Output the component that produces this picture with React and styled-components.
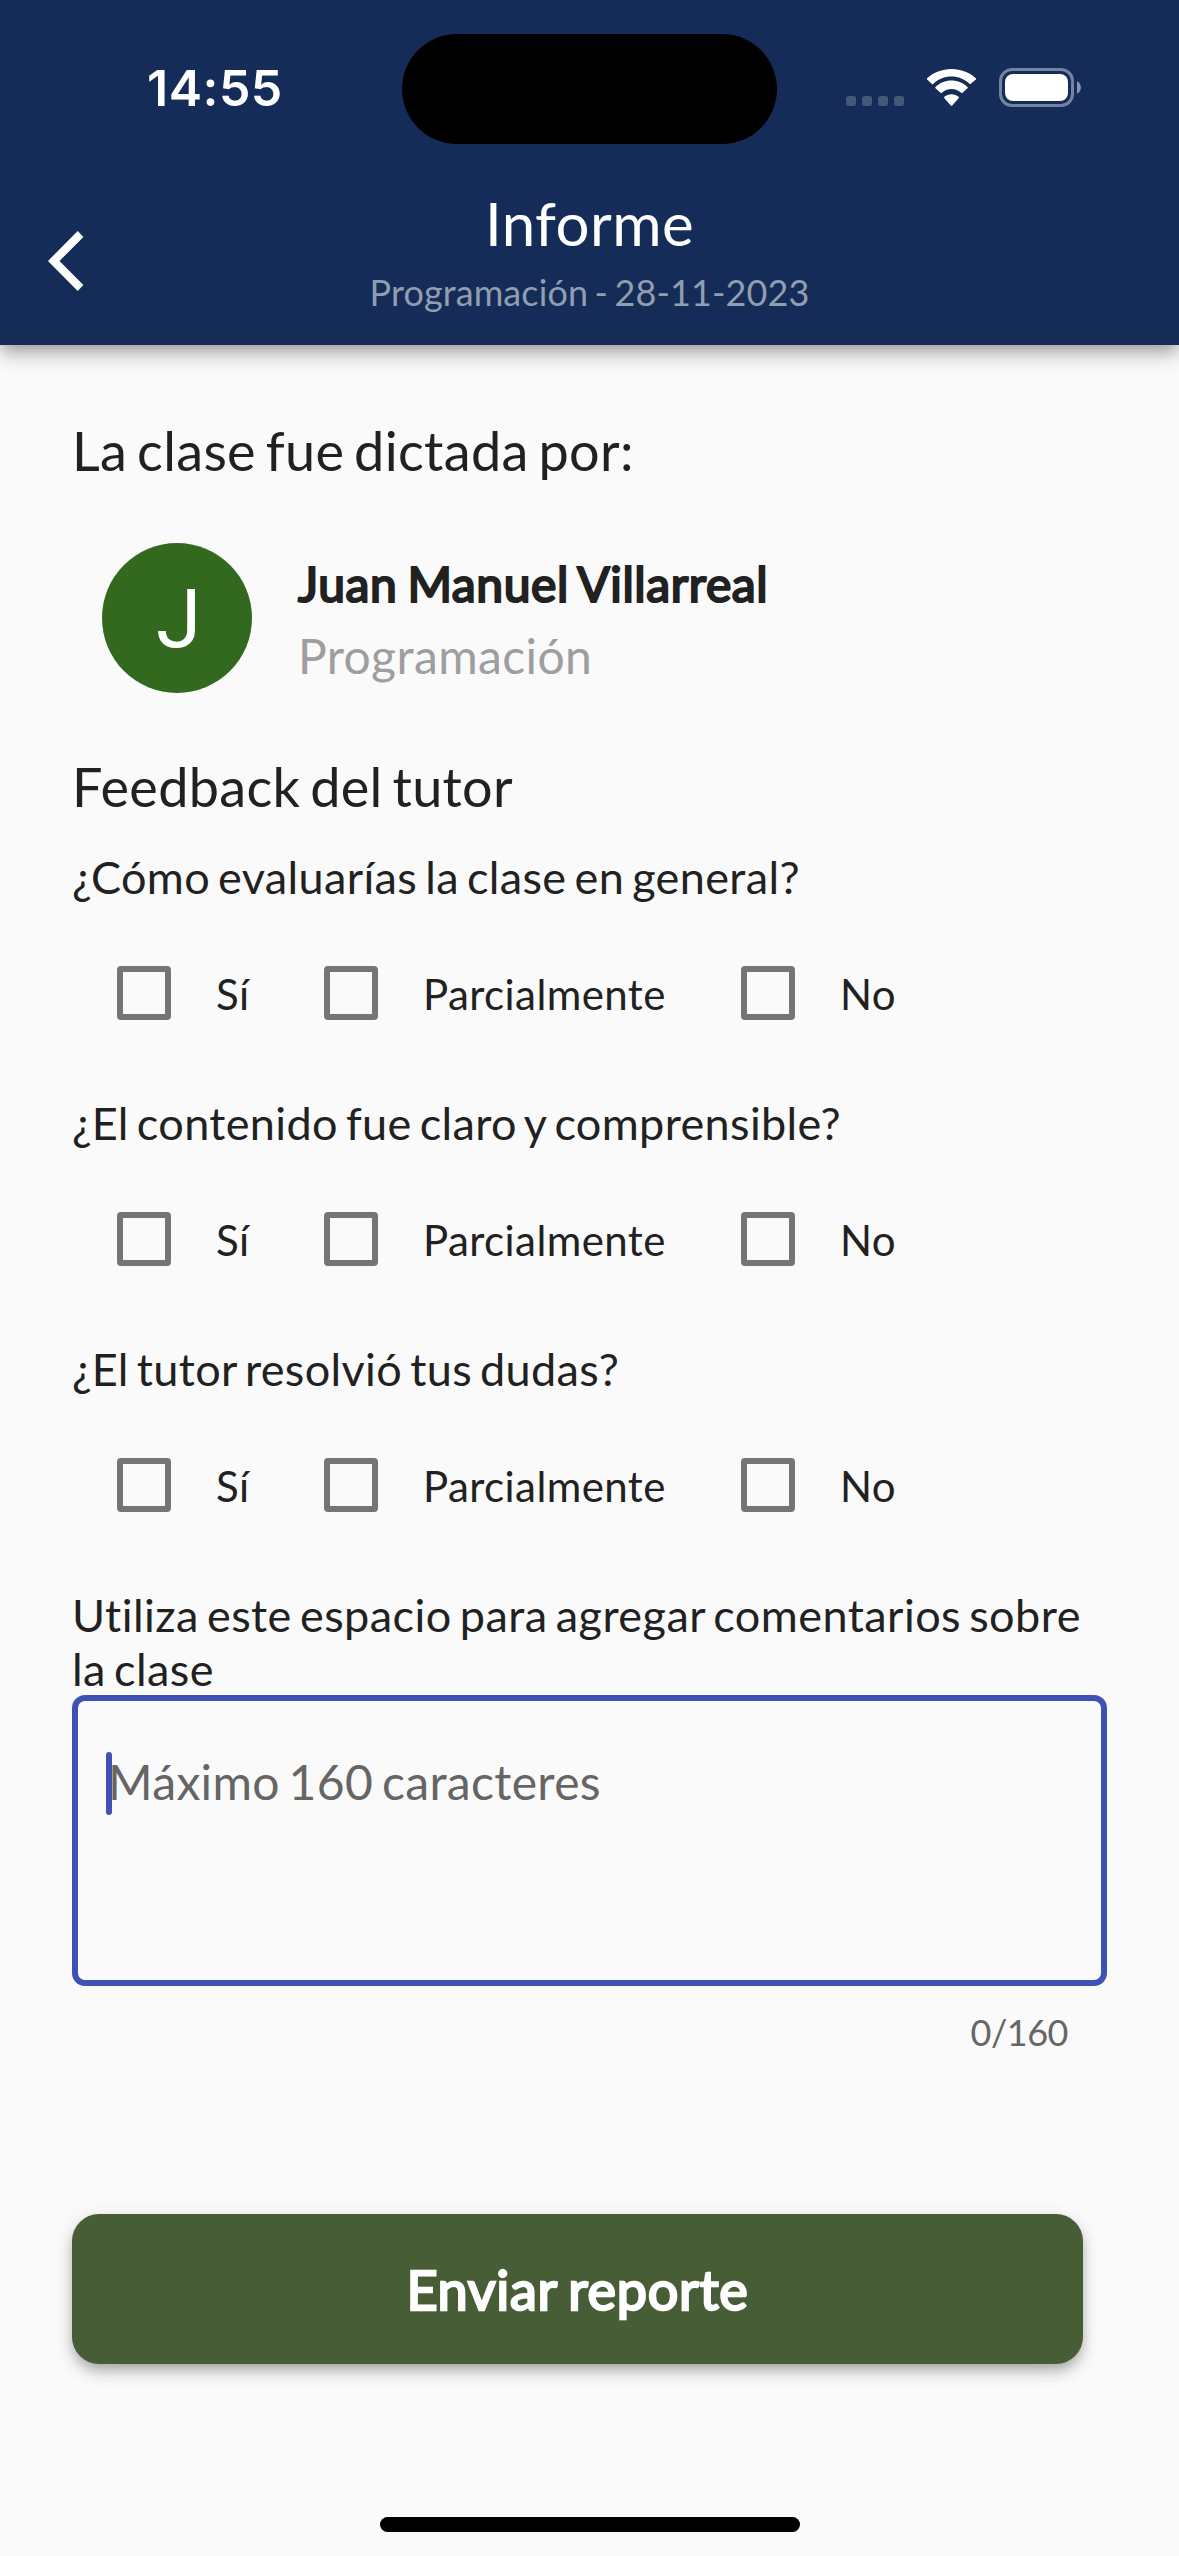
import React from "react";
import styled, { createGlobalStyle } from "styled-components";

const Global = createGlobalStyle`
  *, *::before, *::after { box-sizing: border-box; }
  html, body { margin: 0; padding: 0; background: #fafafa; }
  body {
    font-family: Lato, "Liberation Sans", sans-serif;
    font-variant-ligatures: none;
    color: #212121;
  }
  h1, h2, p, fieldset { margin: 0; padding: 0; border: 0; min-width: 0; font-weight: 400; }
`;

const Screen = styled.div`
  width: 1179px;
  height: 2556px;
  display: flex;
  flex-direction: column;
  background: #fafafa;
  overflow: hidden;
`;

const Header = styled.header`
  flex: none;
  height: 345px;
  background: #142c57;
  box-shadow: 0 6px 12px -3px rgba(0, 0, 0, 0.2), 0 12px 15px 0 rgba(0, 0, 0, 0.14),
    0 3px 30px 0 rgba(0, 0, 0, 0.12);
`;

const StatusBar = styled.div`
  height: 177px;
  padding-top: 34px;
  display: grid;
  grid-template-columns: 402px 375px 402px;
  align-items: start;
`;

const Clock = styled.time`
  height: 110px;
  padding-left: 147px;
  line-height: 109px;
  font-family: Inter, sans-serif;
  font-weight: 600;
  font-size: 50px;
  letter-spacing: 0.5px;
  color: #fff;
`;

const Island = styled.div`
  height: 110px;
  border-radius: 55px;
  background: #000;
`;

const StatusIcons = styled.div`
  display: flex;
  align-items: flex-start;
  padding: 34px 0 0 69px;
`;

const Dots = styled.div`
  display: flex;
  gap: 6px;
  margin: 28px 22px 0 0;
`;

const Dot = styled.span`
  width: 10px;
  height: 10px;
  border-radius: 3px;
  background: #455878;
`;

const WifiSvg = styled.svg`
  display: block;
  margin: 1px 22px 0 0;
`;

const NavBar = styled.div`
  height: 168px;
  display: grid;
  grid-template-columns: 132px 1fr 132px;
`;

const BackButton = styled.button`
  padding: 54px 0 0 48px;
  border: 0;
  background: none;
  display: flex;
  align-items: flex-start;
`;

const Titles = styled.div`
  text-align: center;
  padding-top: 10px;
`;

const Title = styled.h1`
  font-size: 60px;
  line-height: 72px;
  letter-spacing: 0.4px;
  color: #fff;
`;

const Subtitle = styled.p`
  margin-top: 11px;
  font-size: 36px;
  line-height: 44px;
  letter-spacing: 0.003em;
  word-spacing: -0.08em;
  color: #919db1;
`;

const Body = styled.main`
  flex: 1;
  display: flex;
  flex-direction: column;
  padding: 73px 72px 0;
`;

const Heading = styled.h2`
  font-size: 54px;
  line-height: 65px;
  letter-spacing: 0.006em;
  word-spacing: -0.08em;
`;

const Tutor = styled.section`
  display: flex;
  align-items: center;
  gap: 46px;
  margin: 60px 0 61px;
  padding-left: 30px;
`;

const Avatar = styled.div`
  width: 150px;
  height: 150px;
  padding-left: 3px;
  border-radius: 50%;
  background: #33691e;
  color: #fff;
  font-family: Roboto, sans-serif;
  font-size: 82px;
  line-height: 152px;
  text-align: center;
`;

const TutorInfo = styled.div`
  display: flex;
  flex-direction: column;
  gap: 14px;
  padding-top: 3px;
`;

const TutorName = styled.p`
  font-size: 48px;
  line-height: 58px;
  letter-spacing: 0.6px;
  word-spacing: -0.06em;
  -webkit-text-stroke: 2.2px currentColor;
`;

const TutorSubject = styled.p`
  font-size: 48px;
  line-height: 58px;
  letter-spacing: 0.008em;
  color: #9e9e9e;
`;

const Question = styled.fieldset`
  height: 246px;
  padding-top: 31px;
`;

const Prompt = styled.p`
  font-size: 45px;
  line-height: 54px;
  letter-spacing: 0.008em;
  word-spacing: -0.085em;
`;

const Comments = styled.section`
  margin-top: 31px;
`;

const CommentsPrompt = styled(Prompt)`
  letter-spacing: 0.01em;
`;

const Options = styled.div`
  display: flex;
  align-items: center;
  height: 54px;
  margin-top: 62px;
  padding-left: 45px;
`;

const Option = styled.label`
  display: flex;
  align-items: center;
  gap: 45px;
  width: ${(p) => p.$width}px;
  font-size: 42px;
  line-height: 54px;
  letter-spacing: 0.01em;
`;

const OptionText = styled.span`
  padding-top: 2px;
`;

const Check = styled.span`
  flex: none;
  width: 54px;
  height: 54px;
  border: 6px solid #757575;
  border-radius: 4px;
`;

const Field = styled.div`
  width: 1035px;
  height: 291px;
  margin-top: -1px;
  padding: 51px 30px;
  border: 6px solid #3f51b5;
  border-radius: 13px;
  position: relative;
`;

const Caret = styled.span`
  position: absolute;
  left: 28px;
  top: 51px;
  width: 6px;
  height: 63px;
  border-radius: 3px;
  background: #3f51b5;
`;

const Placeholder = styled.p`
  font-size: 48px;
  line-height: 59px;
  letter-spacing: 0.007em;
  word-spacing: -0.08em;
  color: #656565;
`;

const Counter = styled.p`
  margin-top: 24px;
  padding-right: 39px;
  text-align: right;
  font-size: 36px;
  line-height: 44px;
  letter-spacing: -0.013em;
  color: #666;
`;

const Submit = styled.button`
  flex: none;
  width: 1011px;
  height: 150px;
  margin-top: 160px;
  border: 0;
  border-radius: 27px;
  background: #465d35;
  color: #fff;
  font-family: inherit;
  font-size: 54px;
  line-height: 65px;
  letter-spacing: 0.7px;
  word-spacing: -0.055em;
  -webkit-text-stroke: 2.4px currentColor;
  box-shadow: 0 6px 12px -3px rgba(0, 0, 0, 0.2), 0 10px 16px 0 rgba(0, 0, 0, 0.14),
    0 3px 20px 0 rgba(0, 0, 0, 0.08);
`;

const HomeBar = styled.div`
  flex: none;
  width: 420px;
  height: 15px;
  margin: 0 auto 24px;
  border-radius: 8px;
  background: #000;
`;

const questions = [
  "¿Cómo evaluarías la clase en general?",
  "¿El contenido fue claro y comprensible?",
  "¿El tutor resolvió tus dudas?",
];

const options = [
  { label: "Sí", width: 207 },
  { label: "Parcialmente", width: 417 },
  { label: "No", width: 160 },
];

function Wifi() {
  return (
    <WifiSvg width="51" height="37" viewBox="0 0 51 37" fill="#fff">
      <path d="M25.500 7.6c6.900 0 13.200 2.700 17.900 7.200.4.3.9.3 1.300 0l5.200-4.200c.4-.4.4-1 0-1.400C43.500 3.500 34.900 0 25.500 0S7.500 3.500 1.100 9.200c-.4.4-.4 1 0 1.400l4.800 4.300c.4.3.9.3 1.300 0 4.800-4.600 11.200-7.300 18.300-7.300z" />
      <path d="M25.500 20c3.700 0 7.100 1.400 9.700 3.800.4.300.9.300 1.300 0l5-4.500c.4-.4.4-1 0-1.400-4.200-4-9.800-6.400-16-6.400s-11.800 2.400-16 6.400c-.4.400-.4 1 0 1.400l5 4.500c.4.300.9.300 1.300 0 2.600-2.400 6-3.800 9.700-3.800z" />
      <path d="M32.600 29.200c.4-.4.4-1 0-1.400-1.900-1.600-4.400-2.500-7.100-2.500s-5.200.9-7.100 2.500c-.4.400-.4 1 0 1.400l6.400 7.200c.4.400 1 .4 1.400 0z" />
    </WifiSvg>
  );
}

function Battery() {
  return (
    <svg width="82" height="39" viewBox="0 0 82 39">
      <rect x="1.500" y="1.500" width="72" height="36" rx="11.500" fill="none" stroke="#7583a0" strokeWidth="3" />
      <rect x="6" y="6" width="63" height="27" rx="8" fill="#fff" />
      <path d="M78 13.300c2.300 1 3.900 3.400 3.900 6.200s-1.600 5.200-3.900 6.200z" fill="#8a96ab" />
    </svg>
  );
}

export default function App() {
  return (
    <Screen>
      <Global />
      <Header>
        <StatusBar>
          <Clock>14:55</Clock>
          <Island />
          <StatusIcons>
            <Dots>
              <Dot />
              <Dot />
              <Dot />
              <Dot />
            </Dots>
            <Wifi />
            <Battery />
          </StatusIcons>
        </StatusBar>
        <NavBar>
          <BackButton aria-label="Volver">
            <svg width="36" height="60" viewBox="0 0 36 60" fill="#fff">
              <path d="M35.400 5.900 29.700 0 0 30l29.700 30 5.700-5.900L11.500 30z" />
            </svg>
          </BackButton>
          <Titles>
            <Title>Informe</Title>
            <Subtitle>Programación - 28-11-2023</Subtitle>
          </Titles>
        </NavBar>
      </Header>
      <Body>
        <Heading>La clase fue dictada por:</Heading>
        <Tutor>
          <Avatar>J</Avatar>
          <TutorInfo>
            <TutorName>Juan Manuel Villarreal</TutorName>
            <TutorSubject>Programación</TutorSubject>
          </TutorInfo>
        </Tutor>
        <Heading>Feedback del tutor</Heading>
        {questions.map((q) => (
          <Question key={q}>
            <Prompt>{q}</Prompt>
            <Options>
              {options.map((o) => (
                <Option key={o.label} $width={o.width}>
                  <Check />
                  <OptionText>{o.label}</OptionText>
                </Option>
              ))}
            </Options>
          </Question>
        ))}
        <Comments>
          <CommentsPrompt>Utiliza este espacio para agregar comentarios sobre la clase</CommentsPrompt>
          <Field>
            <Placeholder>Máximo 160 caracteres</Placeholder>
            <Caret />
          </Field>
          <Counter>0/160</Counter>
        </Comments>
        <Submit>Enviar reporte</Submit>
      </Body>
      <HomeBar />
    </Screen>
  );
}
